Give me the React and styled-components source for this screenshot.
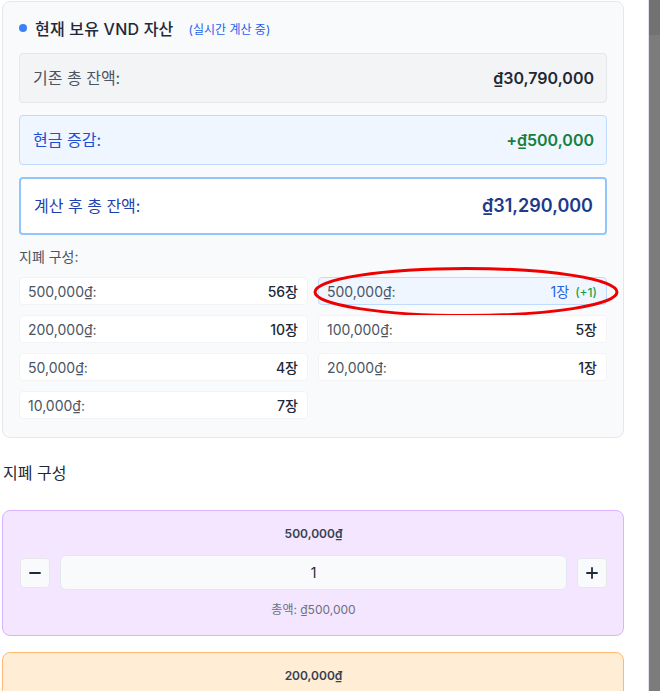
import React from "react";
import styled, { createGlobalStyle, css } from "styled-components";

const GlobalStyle = createGlobalStyle`
  html, body {
    margin: 0;
    padding: 0;
    background: #ffffff;
    overflow: hidden;
  }
  body {
    font-family: Inter, "Noto Sans CJK KR", "Noto Sans", sans-serif;
    color: #1f2937;
  }
  * { box-sizing: border-box; }
`;

const Screen = styled.div`
  display: flex;
  height: 100vh;
`;

const Main = styled.main`
  width: 648px;
  flex-shrink: 0;
  padding: 0 24px 0 2px;
  overflow: hidden;
`;

// right edge: a plain gray scroll strip
const ScrollTrack = styled.div`
  flex: 1;
  display: flex;
  flex-direction: column;
  background: #7b7c7b;
  border-left: 1px solid #dfe3ea;
`;

const ScrollThumb = styled.div`
  height: 35px;
  background: #717271;
`;

// Summary card
const Card = styled.section`
  margin-top: 1px;
  background: #f8fafc;
  border: 1px solid #e5e7eb;
  border-radius: 8px;
  padding: 14px 16px 18px;
`;

const Title = styled.h2`
  display: flex;
  align-items: center;
  margin: 0 0 13px;
  height: 24px;
  font-size: 16px;
  font-weight: 500;
  letter-spacing: 0.2px;
  color: #1f2937;
`;

const Dot = styled.span`
  width: 8px;
  height: 8px;
  border-radius: 50%;
  background: #3b82f6;
  margin: 0 8px 0 0;
`;

const LiveTag = styled.span`
  margin-left: 15px;
  font-size: 12px;
  font-weight: 400;
  letter-spacing: 0;
  color: #2563eb;
`;

const tones = {
  base: css`
    background: #f3f4f6;
    border: 1px solid #e5e7eb;
    color: #4b5563;
    padding: 12px 12px 12px 13px;
  `,
  delta: css`
    background: #eff6ff;
    border: 1px solid #bfdbfe;
    color: #1d4ed8;
    padding: 12px 12px 12px 13px;
  `,
  total: css`
    background: #ffffff;
    border: 2px solid #93c5fd;
    color: #1e40af;
    padding: 13px 12px 13px 13px;
  `
};

const SumRow = styled.div`
  display: flex;
  align-items: center;
  justify-content: space-between;
  border-radius: 4px;
  margin-bottom: 12px;
  font-size: 16px;
  line-height: 24px;
  ${({ $tone }) => tones[$tone]}

  &:last-of-type {
    margin-bottom: 0;
  }
`;

const SumValue = styled.span`
  font-weight: 600;
  font-size: ${({ $large }) => ($large ? "18px" : "16px")};
  line-height: ${({ $large }) => ($large ? "28px" : "24px")};
  color: ${({ $color }) => $color};
`;

const SubLabel = styled.div`
  margin: 12px 0 10px;
  font-size: 14px;
  line-height: 20px;
  color: #4b5563;
`;

const NoteGrid = styled.div`
  display: grid;
  grid-template-columns: 1fr 1fr;
  gap: 10px;
`;

const NoteCell = styled.div`
  position: relative;
  display: flex;
  align-items: center;
  justify-content: space-between;
  height: 28px;
  padding: 0 9px 0 8px;
  border-radius: 4px;
  font-size: 14px;
  background: ${({ $changed }) => ($changed ? "#eff6ff" : "#ffffff")};
  border: 1px solid ${({ $changed }) => ($changed ? "#bfdbfe" : "#f1f3f5")};
`;

const NoteName = styled.span`
  color: #4b5563;
`;

const NoteCount = styled.span`
  display: flex;
  align-items: baseline;
  gap: 6px;
  font-weight: ${({ $changed }) => ($changed ? 400 : 500)};
  color: ${({ $changed }) => ($changed ? "#2563eb" : "#1f2937")};
`;

const Diff = styled.small`
  font-size: 12px;
  font-weight: 500;
  color: #16a34a;
`;

// red hand-drawn style ring over the changed cell
const Ring = styled.svg`
  position: absolute;
  left: -7px;
  top: -12px;
  width: 308px;
  height: 52px;
  overflow: visible;
  pointer-events: none;
`;

// Denomination editors
const SectionTitle = styled.h3`
  margin: 23px 0 25px 1px;
  font-size: 16px;
  line-height: 24px;
  font-weight: 400;
  color: #1f2937;
`;

const noteTones = {
  purple: { bg: "#f3e6fe", border: "#d8b4fe" },
  orange: { bg: "#ffedd5", border: "#fdba74" }
};

const NoteCard = styled.div`
  background: ${({ $tone }) => noteTones[$tone].bg};
  border: 1px solid ${({ $tone }) => noteTones[$tone].border};
  border-radius: 8px;
  padding: 13px 16px 17px 17px;
  margin-bottom: 16px;
  text-align: center;
`;

const NoteTitle = styled.div`
  font-size: 12px;
  line-height: 20px;
  font-weight: 600;
  color: #374151;
  margin-bottom: 11px;
`;

const Stepper = styled.div`
  display: flex;
  align-items: center;
  gap: 10px;
`;

const StepButton = styled.button`
  width: 30px;
  height: 30px;
  flex-shrink: 0;
  display: flex;
  align-items: center;
  justify-content: center;
  padding: 0;
  background: #f8fafc;
  border: 1px solid #e5e7eb;
  border-radius: 4px;
  color: #1f2937;
  cursor: pointer;
`;

const CountInput = styled.input`
  flex: 1;
  min-width: 0;
  height: 35px;
  background: #f8fafc;
  border: 1px solid #e2e8f0;
  border-radius: 6px;
  text-align: center;
  font-family: inherit;
  font-size: 14px;
  color: #1f2937;
  outline: none;
`;

const NoteTotal = styled.div`
  margin-top: 12px;
  font-size: 12px;
  line-height: 16px;
  color: #6b7280;
`;

const notes = [
  { name: "500,000₫:", count: "56장" },
  { name: "500,000₫:", count: "1장", diff: "(+1)", changed: true },
  { name: "200,000₫:", count: "10장" },
  { name: "100,000₫:", count: "5장" },
  { name: "50,000₫:", count: "4장" },
  { name: "20,000₫:", count: "1장" },
  { name: "10,000₫:", count: "7장" }
];

function Minus() {
  return (
    <svg width="12" height="12" viewBox="0 0 12 12">
      <path d="M1 6h10" stroke="#1f2937" strokeWidth="1.8" strokeLinecap="round" />
    </svg>
  );
}

function Plus() {
  return (
    <svg width="12" height="12" viewBox="0 0 12 12">
      <path d="M1 6h10M6 1v10" stroke="#1f2937" strokeWidth="1.8" strokeLinecap="round" />
    </svg>
  );
}

export default function App() {
  return (
    <>
      <GlobalStyle />
      <Screen>
        <Main>
          <Card>
            <Title>
              <Dot />
              현재 보유 VND 자산
              <LiveTag>(실시간 계산 중)</LiveTag>
            </Title>

            <SumRow $tone="base">
              <span>기존 총 잔액:</span>
              <SumValue $color="#1f2937">₫30,790,000</SumValue>
            </SumRow>
            <SumRow $tone="delta">
              <span>현금 증감:</span>
              <SumValue $color="#15803d">+₫500,000</SumValue>
            </SumRow>
            <SumRow $tone="total">
              <span>계산 후 총 잔액:</span>
              <SumValue $large $color="#1e3a8a">₫31,290,000</SumValue>
            </SumRow>

            <SubLabel>지폐 구성:</SubLabel>
            <NoteGrid>
              {notes.map((n, i) => (
                <NoteCell key={i} $changed={n.changed}>
                  <NoteName>{n.name}</NoteName>
                  <NoteCount $changed={n.changed}>
                    {n.count}
                    {n.diff && <Diff>{n.diff}</Diff>}
                  </NoteCount>
                  {n.changed && (
                    <Ring viewBox="0 0 308 52">
                      <ellipse cx="154" cy="26" rx="151" ry="23.5" fill="none" stroke="#ee0000" strokeWidth="3" />
                    </Ring>
                  )}
                </NoteCell>
              ))}
            </NoteGrid>
          </Card>

          <SectionTitle>지폐 구성</SectionTitle>

          <NoteCard $tone="purple">
            <NoteTitle>500,000₫</NoteTitle>
            <Stepper>
              <StepButton aria-label="decrease"><Minus /></StepButton>
              <CountInput defaultValue="1" />
              <StepButton aria-label="increase"><Plus /></StepButton>
            </Stepper>
            <NoteTotal>총액: ₫500,000</NoteTotal>
          </NoteCard>

          <NoteCard $tone="orange">
            <NoteTitle>200,000₫</NoteTitle>
            <Stepper>
              <StepButton aria-label="decrease"><Minus /></StepButton>
              <CountInput defaultValue="0" />
              <StepButton aria-label="increase"><Plus /></StepButton>
            </Stepper>
            <NoteTotal>총액: ₫0</NoteTotal>
          </NoteCard>
        </Main>
        <ScrollTrack>
          <ScrollThumb />
        </ScrollTrack>
      </Screen>
    </>
  );
}
